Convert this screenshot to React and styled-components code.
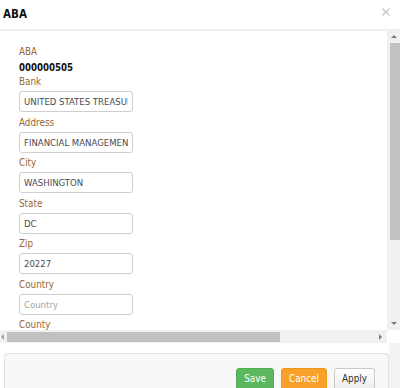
import React from "react";
import styled, { createGlobalStyle } from "styled-components";

const GlobalStyle = createGlobalStyle`
  html, body {
    margin: 0;
    padding: 0;
    background: #fff;
  }
  body {
    font-family: "DejaVu Sans Condensed", "DejaVu Sans", "Liberation Sans", sans-serif;
    font-stretch: condensed;
  }
  * { box-sizing: border-box; }
`;

const Dialog = styled.div`
  width: 400px;
  height: 388px;
  overflow: hidden;
  display: flex;
  flex-direction: column;
  background: #fff;
`;

const Header = styled.div`
  height: 31px;
  flex: none;
  display: flex;
  align-items: flex-start;
  justify-content: space-between;
  padding: 6px 10px 0 3px;
  border-bottom: 2px solid #efefef;
`;

const Title = styled.h1`
  margin: 0;
  font-size: 11.5px;
  font-weight: bold;
  color: #111;
  line-height: 16px;
`;

const Close = styled.svg`
  width: 8px;
  height: 8px;
  margin-top: 2px;
`;

const ScrollFrame = styled.div`
  flex: none;
  display: grid;
  grid-template-columns: 387px 13px;
  grid-template-rows: 299px 13px;
`;

const Viewport = styled.div`
  overflow: hidden;
  background: #fff;
`;

const Form = styled.div`
  width: 530px;
  padding: 14px 0 0 19px;
  display: flex;
  flex-direction: column;
`;

const Label = styled.div`
  font-size: 9.8px;
  line-height: 14px;
  color: #9a6733;
`;

const Value = styled.div`
  font-size: 9.6px;
  line-height: 15px;
  margin-top: 1px;
  font-weight: bold;
  color: #111;
`;

const Input = styled.input`
  width: 114px;
  height: 21px;
  margin: 2px 0 3.5px;
  padding: 0 4px;
  border: 1px solid #cfcfcf;
  border-radius: 3px;
  font-family: inherit;
  font-stretch: condensed;
  font-size: 9.5px;
  color: #4a4a55;
  background: #fff;
  outline: none;
  &::placeholder {
    color: #a5a5a5;
  }
`;

const VTrack = styled.div`
  background: #f1f1f1;
  display: flex;
  flex-direction: column;
  align-items: center;
  padding: 4px 0 5px;
`;

const HTrack = styled.div`
  background: #f1f1f1;
  display: flex;
  align-items: center;
  padding: 0 5px 0 1px;
`;

const Corner = styled.div`
  background: #fff;
`;

const Arrow = styled.span`
  flex: none;
  width: 0;
  height: 0;
  border-style: solid;
  border-color: transparent;
  ${({ dir }) =>
    dir === "up"
      ? "border-width: 0 3px 3px; border-bottom-color: #7d7d7d;"
      : dir === "down"
      ? "border-width: 3px 3px 0; border-top-color: #7d7d7d;"
      : dir === "left"
      ? "border-width: 3px 3px 3px 0; border-right-color: #a0a0a0;"
      : "border-width: 3px 0 3px 3px; border-left-color: #7d7d7d;"}
`;

const VThumb = styled.div`
  width: 10px;
  height: 197px;
  margin: 5px 0 0 2px;
  background: #c1c1c1;
`;

const HThumb = styled.div`
  width: 273px;
  height: 10px;
  margin-left: 3px;
  background: #c1c1c1;
`;

const Spacer = styled.div`
  flex: 1;
`;

const Footer = styled.div`
  flex: 1;
  display: flex;
  padding: 10px 0 0 4px;
  background: linear-gradient(to right, #fff 389px, #f3f3f3 389px);
`;

const Panel = styled.div`
  width: 385px;
  display: flex;
  justify-content: flex-end;
  align-items: flex-start;
  gap: 7px;
  padding: 14px 13px 0 0;
  background: #f8f8f8;
  border: 1px solid #e2e2e2;
  border-bottom: none;
  border-radius: 4px 4px 0 0;
`;

const Button = styled.button`
  height: 23px;
  padding: 0 0 2px;
  width: ${({ w }) => w}px;
  border-radius: 3px;
  font-family: inherit;
  font-stretch: condensed;
  font-size: 9.8px;
  line-height: 18px;
  cursor: pointer;
  border: 1px solid ${({ border }) => border};
  background: ${({ bg }) => bg};
  color: ${({ fg }) => fg};
`;

const fields = [
  { label: "Bank", value: "UNITED STATES TREASURY" },
  { label: "Address", value: "FINANCIAL MANAGEMENT SERVICE" },
  { label: "City", value: "WASHINGTON" },
  { label: "State", value: "DC" },
  { label: "Zip", value: "20227" },
  { label: "Country", value: "", placeholder: "Country" },
  { label: "County", value: "", placeholder: "County" },
  { label: "Phone", value: "", placeholder: "Phone" },
  { label: "Fax", value: "", placeholder: "Fax" },
];

export default function App() {
  return (
    <>
      <GlobalStyle />
      <Dialog>
        <Header>
          <Title>ABA</Title>
          <Close viewBox="0 0 8 8">
            <path d="M0.5 0.5 L7.5 7.5 M7.5 0.5 L0.5 7.5" stroke="#c4c4c4" strokeWidth="1.3" />
          </Close>
        </Header>
        <ScrollFrame>
          <Viewport>
            <Form>
              <Label>ABA</Label>
              <Value>000000505</Value>
              {fields.map((f) => (
                <React.Fragment key={f.label}>
                  <Label>{f.label}</Label>
                  <Input defaultValue={f.value} placeholder={f.placeholder} readOnly />
                </React.Fragment>
              ))}
            </Form>
          </Viewport>
          <VTrack>
            <Arrow dir="up" />
            <VThumb />
            <Spacer />
            <Arrow dir="down" />
          </VTrack>
          <HTrack>
            <Arrow dir="left" />
            <HThumb />
            <Spacer />
            <Arrow dir="right" />
          </HTrack>
          <Corner />
        </ScrollFrame>
        <Footer>
          <Panel>
            <Button w={38} bg="#5cb85c" border="#4cae4c" fg="#fff">Save</Button>
            <Button w={46} bg="#f7a02a" border="#ee951c" fg="#fff">Cancel</Button>
            <Button w={41} bg="linear-gradient(#ffffff, #ececec)" border="#c9c9c9" fg="#333">Apply</Button>
          </Panel>
        </Footer>
      </Dialog>
    </>
  );
}
